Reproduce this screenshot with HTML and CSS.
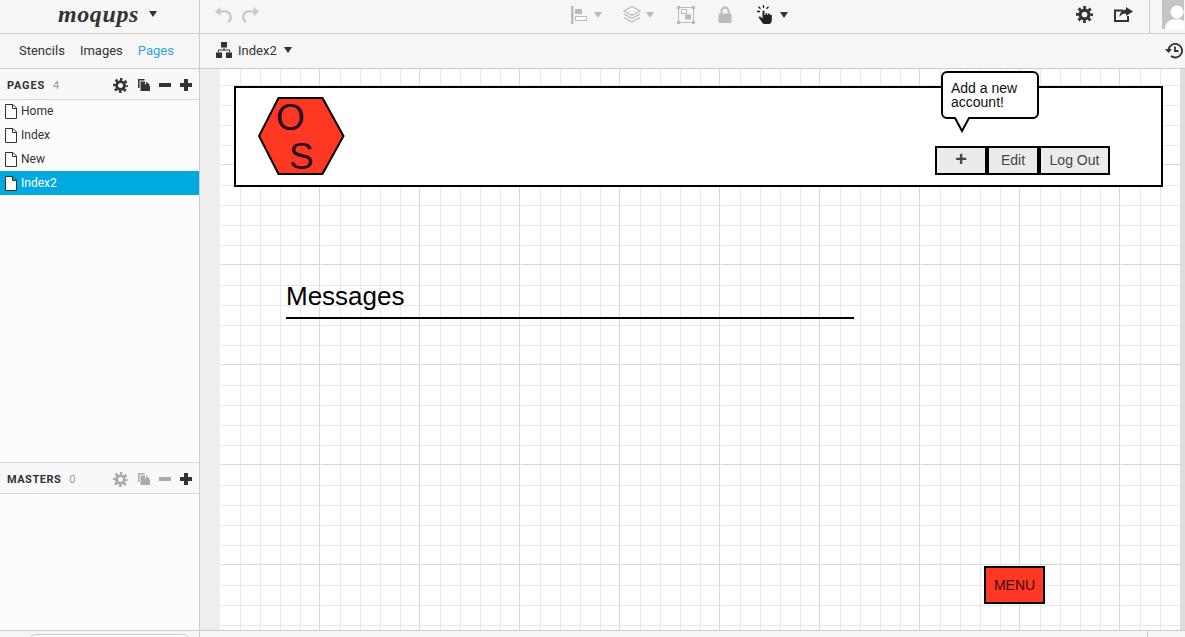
FILE: index.html
```html
<!DOCTYPE html>
<html lang="en">
<head>
  <meta charset="UTF-8" />
  <title>Moqups - Index2</title>
  <link rel="stylesheet" href="styles.css">
</head>
<body>
  <svg class="defs" width="0" height="0">
    <defs>
      <symbol id="gear" viewBox="0 0 16 16">
        <circle cx="8" cy="8" r="4.2" fill="none" stroke="currentColor" stroke-width="3"/>
        <circle cx="8" cy="8" r="6.6" fill="none" stroke="currentColor" stroke-width="2.8" stroke-dasharray="2.6 2.58" stroke-dashoffset="1.3"/>
      </symbol>
      <symbol id="copy" viewBox="0 0 12 12">
        <path d="M0 0h6.5v1.5H1.5V9H0z" fill="currentColor"/>
        <path d="M2.5 2.5h4.5v3h3.2L12 7v5H2.5zM8 2.5l4 3.5H8z" fill="currentColor"/>
      </symbol>
      <symbol id="minus" viewBox="0 0 12 12"><rect x="0" y="4" width="12" height="4" fill="currentColor"/></symbol>
      <symbol id="plus" viewBox="0 0 12 12"><path d="M4 0h4v4h4v4H8v4H4V8H0V4h4z" fill="currentColor"/></symbol>
      <symbol id="sheet" viewBox="0 0 12 15"><path d="M.5.5h7.5l3.5 3.5v10.500H.5zM7.500.5v4h4" fill="#fff" stroke="#333" stroke-width="1"/></symbol>
      <symbol id="caret" viewBox="0 0 8 6"><path d="M0 0h8L4 6z" fill="currentColor"/></symbol>
      <symbol id="undo" viewBox="0 0 17 16"><path d="M4 4.500h5.500a5.700 5.700 0 0 1 3.500 10.500" fill="none" stroke="currentColor" stroke-width="2.200"/><path d="M5.500 0v9L0 4.500z" fill="currentColor"/></symbol>
    </defs>
  </svg>

  <header class="bar top-bar">
    <div class="brand">
      <span class="logo">moqups</span>
      <svg class="caret"><use href="#caret"/></svg>
    </div>
    <div class="tools">
      <div class="history">
        <svg class="ico-undo"><use href="#undo"/></svg>
        <svg class="ico-undo flip"><use href="#undo"/></svg>
      </div>
      <div class="arrange">
        <svg class="ico-align" viewBox="0 0 16 18"><rect x="0" y="0" width="2.500" height="18" fill="currentColor"/><rect x="4" y="3" width="7" height="5" fill="currentColor"/><rect x="4.500" y="10.500" width="11" height="4" fill="#fff" stroke="currentColor"/></svg>
        <svg class="caret dim"><use href="#caret"/></svg>
        <svg class="ico-layers" viewBox="0 0 18 17"><path d="M9 .5l8 4.500-8 4.500-8-4.500z" fill="none" stroke="currentColor" stroke-width="1.300"/><path d="M1 8l8 4.500L17 8M1 11.500L9 16l8-4.500" fill="none" stroke="currentColor" stroke-width="1.300"/></svg>
        <svg class="caret dim"><use href="#caret"/></svg>
        <svg class="ico-group" viewBox="0 0 18 18"><rect x="1.500" y="1.500" width="15" height="15" fill="none" stroke="currentColor"/><rect x="4.500" y="3.500" width="5" height="4" fill="#fff" stroke="currentColor"/><rect x="8" y="8.500" width="6" height="5" fill="currentColor"/><path d="M0 0h3v3H0zM15 0h3v3h-3zM0 15h3v3H0zM15 15h3v3h-3z" fill="currentColor"/></svg>
        <svg class="ico-lock" viewBox="0 0 14 17"><path d="M3.500 8V5a3.500 3.500 0 0 1 7 0v3" fill="none" stroke="currentColor" stroke-width="2"/><rect x="0.500" y="7.500" width="13" height="9.500" rx="1" fill="currentColor"/></svg>
        <svg class="ico-hand" viewBox="0 0 16 19"><path d="M5.500 6.500a1 1 0 0 1 2 0V10l1 0V8.500a1 1 0 0 1 1.800 0V10h.7V9a1 1 0 0 1 1.700 0v1h.5a1 1 0 0 1 1.600.5V15c0 2-1 4-3 4H7.500c-1.500 0-2-1-3-2.500L2 13c-.8-1.200.6-2.200 1.500-1.200l2 1.800z" fill="#222"/><path d="M6.500 0v3M1.500 1.800l2 2M11.500 1.800l-2 2M0 6.500h3" stroke="#222" stroke-width="1.300"/></svg>
        <svg class="caret"><use href="#caret"/></svg>
      </div>
      <div class="actions">
        <svg class="ico-gear"><use href="#gear"/></svg>
        <svg class="ico-share" viewBox="0 0 19 15"><path d="M1 3.500h8M1 2.500V14h13V9" fill="none" stroke="currentColor" stroke-width="2"/><path d="M12 0l7 4.500L12 9V6.500C9 6.500 7 7.500 5.500 10 5.500 6 8 3 12 2.500z" fill="currentColor"/></svg>
      </div>
      <div class="avatar">
        <svg viewBox="0 0 22 29"><rect width="22" height="29" fill="#c4c4c4"/><circle cx="15" cy="12" r="6.500" fill="#fff"/><path d="M3 29c0-7 5-10 12-10s7 3 7 3v7z" fill="#fff"/></svg>
      </div>
    </div>
  </header>

  <nav class="bar sub-bar">
    <div class="tabs">
      <a>Stencils</a>
      <a>Images</a>
      <a class="active">Pages</a>
    </div>
    <div class="crumb">
      <svg class="ico-map" viewBox="0 0 16 16"><rect x="5" y="0" width="6" height="5.500" fill="currentColor"/><path d="M8 5.500v3M2.500 10.500v-2.500h11v2.500" fill="none" stroke="currentColor"/><rect x="0" y="10.500" width="6" height="5.500" fill="currentColor"/><rect x="10" y="10.500" width="6" height="5.500" fill="currentColor"/></svg>
      <span>Index2</span>
      <svg class="caret"><use href="#caret"/></svg>
      <svg class="ico-restore" viewBox="0 0 18 17"><path d="M3.500 8a6.800 6.800 0 1 1 2.500 6" fill="none" stroke="currentColor" stroke-width="1.800"/><path d="M0 7h7l-3.500 4z" fill="currentColor"/><path d="M10 4.500V9h3.500" fill="none" stroke="currentColor" stroke-width="1.800"/></svg>
    </div>
  </nav>

  <div class="main">
    <aside class="sidebar">
      <section class="panel pages-panel">
        <div class="panel-head">
          <span class="panel-title">PAGES</span><span class="count">4</span>
          <div class="panel-icons">
            <svg><use href="#gear"/></svg>
            <svg><use href="#copy"/></svg>
            <svg><use href="#minus"/></svg>
            <svg><use href="#plus"/></svg>
          </div>
        </div>
        <ul class="page-list">
          <li><svg><use href="#sheet"/></svg>Home</li>
          <li><svg><use href="#sheet"/></svg>Index</li>
          <li><svg><use href="#sheet"/></svg>New</li>
          <li class="selected"><svg><use href="#sheet"/></svg>Index2</li>
        </ul>
      </section>
      <section class="panel masters-panel">
        <div class="panel-head">
          <span class="panel-title">MASTERS</span><span class="count">0</span>
          <div class="panel-icons muted">
            <svg><use href="#gear"/></svg>
            <svg><use href="#copy"/></svg>
            <svg><use href="#minus"/></svg>
            <svg class="on"><use href="#plus"/></svg>
          </div>
        </div>
      </section>
    </aside>

    <div class="workspace">
      <div class="canvas">
        <div class="mock-header"></div>

        <div class="hexagon">
          <svg viewBox="0 0 87 78"><polygon points="20.500,1 64.500,1 85.500,39 64.500,77 20.500,77 1,39" fill="#ff3823" stroke="#000" stroke-width="2"/></svg>
          <span class="hex-o">O</span>
          <span class="hex-s">S</span>
        </div>

        <div class="callout">
          <svg viewBox="0 0 98 62"><path d="M6 1h86a5 5 0 0 1 5 5v36a5 5 0 0 1-5 5H28l-7 13-7-13H6a5 5 0 0 1-5-5V6a5 5 0 0 1 5-5z" fill="#fff" stroke="#000" stroke-width="2"/></svg>
          <p>Add a new account!</p>
        </div>

        <div class="btn-row">
          <button class="btn btn-plus">+</button>
          <button class="btn btn-edit">Edit</button>
          <button class="btn btn-out">Log Out</button>
        </div>

        <h2 class="messages">Messages</h2>

        <button class="menu-btn">MENU</button>
      </div>
      <div class="scroll-edge"></div>
    </div>
  </div>

  <footer class="status">
    <div class="status-left"><div class="search-pill"></div></div>
    <div class="status-mid"></div>
    <div class="status-right"></div>
  </footer>
</body>
</html>
```

FILE: styles.css
```css
* {
  box-sizing: border-box;
}
html, body {
  height: 100%;
}
body {
  margin: 0;
  display: flex;
  flex-direction: column;
  overflow: hidden;
  font-family: Roboto, sans-serif;
  font-size: 13px;
  color: #333;
  background: #f6f6f6;
}
svg {
  display: block;
  flex: none;
}
.defs {
  position: absolute;
}
.caret {
  width: 8px;
  height: 6px;
  color: #333;
}
.caret.dim {
  color: #bbb;
}

/* top bars */
.bar {
  display: flex;
  flex: none;
  background: #f6f6f6;
  border-bottom: 1px solid #ccc;
}
.top-bar {
  height: 34px;
}
.sub-bar {
  height: 35px;
}
.brand {
  width: 200px;
  flex: none;
  display: flex;
  align-items: center;
  padding: 0 0 5px 58px;
  border-right: 1px solid #ccc;
}
.logo {
  width: 91px;
  font-family: "Liberation Serif", serif;
  font-style: italic;
  font-weight: bold;
  font-size: 24px;
  letter-spacing: 0.6px;
  color: #333;
}
.tools {
  flex: 1;
  display: flex;
  align-items: center;
  padding-left: 15px;
}
.history {
  display: flex;
  gap: 10px;
  margin-bottom: 4px;
  color: #c8c8c8;
}
.ico-undo {
  width: 17px;
  height: 16px;
}
.flip {
  transform: scaleX(-1);
}
.arrange {
  display: flex;
  align-items: center;
  margin: 0 0 4px 312px;
  color: #bbb;
}
.ico-align {
  width: 16px;
  height: 18px;
  margin-right: 7px;
}
.ico-layers {
  width: 18px;
  height: 17px;
  margin: 0 5px 0 21px;
}
.ico-group {
  width: 18px;
  height: 18px;
  margin: 0 23px 0 23px;
}
.ico-lock {
  width: 14px;
  height: 17px;
  margin-right: 25px;
}
.ico-hand {
  width: 16px;
  height: 19px;
  margin-right: 7px;
}
.actions {
  display: flex;
  align-items: center;
  gap: 21px;
  margin: 0 0 4px 288px;
  color: #333;
}
.ico-gear {
  width: 17px;
  height: 17px;
}
.ico-share {
  width: 19px;
  height: 15px;
}
.avatar {
  align-self: stretch;
  margin-left: 16px;
  padding-left: 12px;
  border-left: 1px solid #ccc;
}
.avatar svg {
  width: 22px;
  height: 29px;
}

.tabs {
  width: 200px;
  flex: none;
  display: flex;
  align-items: center;
  gap: 15px;
  padding: 0 0 2px 19px;
  border-right: 1px solid #ccc;
}
.tabs .active {
  color: #2ea6e0;
}
.crumb {
  flex: 1;
  display: flex;
  align-items: center;
  padding: 0 0 2px 16px;
}
.crumb span {
  margin: 0 7px 0 6px;
}
.ico-map {
  width: 16px;
  height: 16px;
}
.ico-restore {
  width: 18px;
  height: 17px;
  margin-left: auto;
  margin-right: 2px;
}

/* main area */
.main {
  flex: 1;
  display: flex;
  min-height: 0;
}
.sidebar {
  width: 200px;
  flex: none;
  display: flex;
  flex-direction: column;
  background: #fcfcfc;
  border-right: 1px solid #ccc;
}
.pages-panel {
  height: 393px;
}
.panel-head {
  display: flex;
  align-items: center;
  height: 31px;
  padding: 2px 7px 0;
  background: #f8f8f8;
  border-bottom: 1px solid #d8d8d8;
}
.masters-panel .panel-head {
  border-top: 1px solid #d8d8d8;
  height: 32px;
}
.panel-title {
  font-size: 11px;
  font-weight: bold;
  letter-spacing: 0.8px;
}
.masters-panel .panel-title {
  letter-spacing: 0.5px;
}
.count {
  margin-left: 8px;
  font-size: 11px;
  color: #999;
}
.panel-icons {
  margin-left: auto;
  display: flex;
  align-items: center;
  gap: 9px;
  color: #333;
}
.panel-icons svg {
  width: 12px;
  height: 12px;
}
.panel-icons svg:first-child {
  width: 15px;
  height: 15px;
  margin-right: 1px;
}
.panel-icons.muted {
  color: #aaa;
}
.panel-icons .on {
  color: #333;
}
.page-list {
  list-style: none;
  margin: -1px 0 0;
  padding: 0;
}
.page-list li {
  display: flex;
  align-items: center;
  gap: 4px;
  height: 24px;
  padding-left: 5px;
  font-size: 12px;
}
.page-list svg {
  width: 12px;
  height: 15px;
}
.page-list .selected {
  background: #00a9e0;
  color: #fff;
}

.workspace {
  flex: 1;
  display: flex;
  padding-left: 20px;
  background: #eee;
}
.canvas {
  flex: 1;
  position: relative;
  overflow: hidden;
  background-color: #fff;
  background-image:
    linear-gradient(to right, #d8d8d8 1px, #fff 1px, #fff 2px, transparent 2px),
    linear-gradient(to bottom, #d8d8d8 1px, #fff 1px, #fff 2px, transparent 2px),
    linear-gradient(to right, #e8e8e8 1px, transparent 1px),
    linear-gradient(to bottom, #e8e8e8 1px, transparent 1px);
  background-size: 100px 100px, 100px 100px, 20px 20px, 20px 20px;
  background-position: 99px 0, 0 95px, 0 0, 0 16px;
}
.scroll-edge {
  width: 5px;
  flex: none;
  background: #ddd;
}

/* wireframe items, placed freely on the canvas */
.mock-header {
  position: absolute;
  left: 14px;
  top: 17px;
  width: 929px;
  height: 101px;
  background: #fff;
  border: 2px solid #000;
}
.hexagon {
  position: absolute;
  left: 38px;
  top: 28px;
  width: 87px;
  height: 78px;
  font-family: "Liberation Sans", sans-serif;
  font-size: 37px;
  line-height: 37px;
  color: #2b0a1f;
}
.hexagon svg {
  width: 87px;
  height: 78px;
}
.hex-o {
  position: absolute;
  left: 18px;
  top: 2px;
}
.hex-s {
  position: absolute;
  left: 31px;
  top: 41px;
}
.callout {
  position: absolute;
  left: 721px;
  top: 2px;
  width: 98px;
  height: 62px;
  font-family: "Liberation Sans", sans-serif;
  font-size: 14px;
  line-height: 14px;
  color: #111;
}
.callout svg {
  width: 98px;
  height: 62px;
}
.callout p {
  position: absolute;
  left: 10px;
  top: 10px;
  width: 80px;
  margin: 0;
}
.btn-row {
  position: absolute;
  left: 715px;
  top: 77px;
  display: flex;
}
.btn {
  height: 29px;
  padding: 0 0 2px;
  font-family: "Liberation Sans", sans-serif;
  font-size: 14px;
  color: #444;
  background: #ebebeb;
  border: 2px solid #000;
}
.btn-plus {
  width: 52px;
  padding-bottom: 3px;
  font-size: 20px;
  font-weight: bold;
  line-height: 20px;
}
.btn-edit {
  width: 52px;
}
.btn-out {
  width: 71px;
}
.messages {
  position: absolute;
  left: 66px;
  top: 212px;
  width: 568px;
  height: 38px;
  margin: 0;
  font-family: "Liberation Sans", sans-serif;
  font-size: 26px;
  font-weight: normal;
  line-height: 30px;
  color: #000;
  border-bottom: 2px solid #000;
}
.menu-btn {
  position: absolute;
  left: 764px;
  top: 497px;
  width: 61px;
  height: 38px;
  padding: 0;
  font-family: "Liberation Sans", sans-serif;
  font-size: 14px;
  color: #3a0a10;
  background: #ff3823;
  border: 2px solid #000;
}

/* bottom strip */
.status {
  flex: none;
  height: 7px;
  display: flex;
  background: #f6f6f6;
  border-top: 1px solid #ccc;
  overflow: hidden;
}
.status-left {
  width: 200px;
  flex: none;
  padding: 3px 0 0 27px;
  border-right: 1px solid #ccc;
}
.search-pill {
  width: 165px;
  height: 20px;
  background: #fff;
  border: 1px solid #ccc;
  border-radius: 10px;
}
.status-mid {
  width: 948px;
  flex: none;
  border-right: 1px solid #ccc;
}
.status-right {
  flex: 1;
}
```
